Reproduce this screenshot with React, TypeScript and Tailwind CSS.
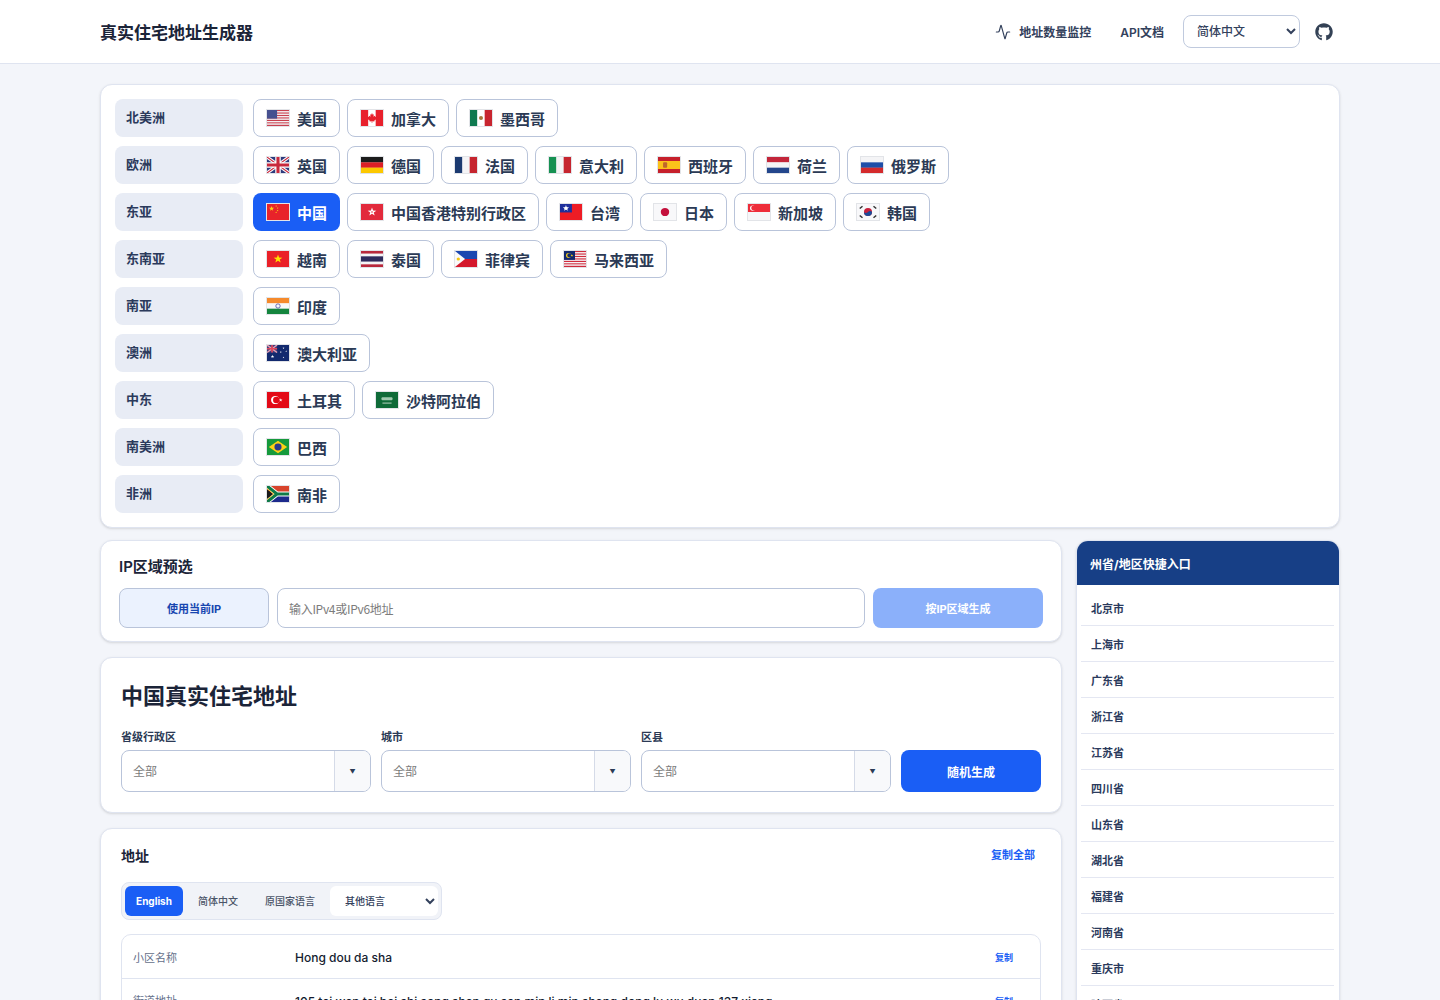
import { Activity } from 'lucide-react';
import { FaGithub } from 'react-icons/fa';
import type { ReactNode } from 'react';

const FONT = 'Inter, "Noto Sans CJK SC", sans-serif';

function Stripes({ colors }: { colors: string[] }) {
  const h = 18 / colors.length;
  return (
    <>
      {colors.map((c, i) => (
        <rect key={i} x="0" y={i * h} width="24" height={h + 0.2} fill={c} />
      ))}
    </>
  );
}

function Bars({ colors }: { colors: string[] }) {
  return (
    <>
      {colors.map((c, i) => (
        <rect key={i} x={i * 8} y="0" width="8.2" height="18" fill={c} />
      ))}
    </>
  );
}

function UsStripes({ a, b }: { a: string; b: string }) {
  const rows = Array.from({ length: 13 }, (_, i) => (i % 2 === 0 ? a : b));
  return <Stripes colors={rows} />;
}

function Star({ x, y, r, fill }: { x: number; y: number; r: number; fill: string }) {
  const pts = Array.from({ length: 10 }, (_, i) => {
    const rad = i % 2 === 0 ? r : r * 0.4;
    const ang = (Math.PI / 5) * i - Math.PI / 2;
    return `${x + rad * Math.cos(ang)},${y + rad * Math.sin(ang)}`;
  }).join(' ');
  return <polygon points={pts} fill={fill} />;
}

const FLAGS: Record<string, ReactNode> = {
  us: (
    <>
      <UsStripes a="#c8404f" b="#f4f4f6" />
      <rect width="11" height="9.7" fill="#46508f" />
    </>
  ),
  ca: (
    <>
      <Bars colors={['#e8202c', '#ffffff', '#e8202c']} />
      <polygon
        points="12,3.5 12.9,5.4 14,4.9 13.6,7.6 15,6.5 15.7,7.8 16.8,7.7 16.3,9.5 16.8,10 14.4,12 14.7,13 12.3,12.7 12.3,14.5 11.7,14.5 11.7,12.7 9.3,13 9.6,12 7.2,10 7.7,9.5 7.2,7.7 8.3,7.8 9,6.5 10.4,7.6 10,4.9 11.1,5.4"
        fill="#e8202c"
      />
    </>
  ),
  mx: (
    <>
      <Bars colors={['#0f7a50', '#ffffff', '#c8252f']} />
      <circle cx="12" cy="9" r="2.2" fill="#a5773a" />
    </>
  ),
  gb: (
    <>
      <rect width="24" height="18" fill="#2d3a7c" />
      <path d="M0 0 24 18M24 0 0 18" stroke="#fff" strokeWidth="3.6" />
      <path d="M0 0 24 18M24 0 0 18" stroke="#c8283c" strokeWidth="1.2" />
      <path d="M12 0V18M0 9H24" stroke="#fff" strokeWidth="6" />
      <path d="M12 0V18M0 9H24" stroke="#c8283c" strokeWidth="3.4" />
    </>
  ),
  de: <Stripes colors={['#1c1c1c', '#dc1f26', '#fcc800']} />,
  fr: <Bars colors={['#1b3a70', '#f4f4f6', '#c6252f']} />,
  it: <Bars colors={['#169152', '#f4f4f6', '#c6252f']} />,
  es: (
    <>
      <Stripes colors={['#c6202c', '#fbc21a', '#fbc21a', '#c6202c']} />
      <rect x="5.5" y="6" width="4.5" height="6" rx="1" fill="#c0662a" />
    </>
  ),
  nl: <Stripes colors={['#c3263a', '#f4f4f6', '#23468c']} />,
  ru: <Stripes colors={['#f4f4f6', '#1e4ea8', '#d42a2c']} />,
  cn: (
    <>
      <rect width="24" height="18" fill="#e8232a" />
      <Star x={5} y={5.2} r={3} fill="#fcd116" />
      <Star x={10} y={2.4} r={1} fill="#fcd116" />
      <Star x={11.6} y={4.6} r={1} fill="#fcd116" />
      <Star x={11.6} y={7.4} r={1} fill="#fcd116" />
      <Star x={10} y={9.4} r={1} fill="#fcd116" />
    </>
  ),
  hk: (
    <>
      <rect width="24" height="18" fill="#e22a3c" />
      <Star x={12} y={9} r={5} fill="#ffffff" />
      <circle cx="12" cy="9" r="0.9" fill="#e22a3c" />
    </>
  ),
  tw: (
    <>
      <rect width="24" height="18" fill="#ee1c25" />
      <rect width="13" height="9.5" fill="#1e2f9c" />
      <Star x={6.5} y={4.8} r={3.6} fill="#ffffff" />
      <circle cx="6.5" cy="4.8" r="1.5" fill="#ffffff" />
    </>
  ),
  jp: (
    <>
      <rect width="24" height="18" fill="#f8f8fa" />
      <circle cx="12" cy="9" r="4.6" fill="#c4103c" />
    </>
  ),
  sg: (
    <>
      <rect width="24" height="18" fill="#f6f6f8" />
      <rect width="24" height="9" fill="#ee2d3a" />
      <circle cx="5.2" cy="4.6" r="3" fill="#fff" />
      <circle cx="6.4" cy="4.6" r="2.8" fill="#ee2d3a" />
    </>
  ),
  kr: (
    <>
      <rect width="24" height="18" fill="#f8f8fa" />
      <circle cx="12" cy="9" r="4.4" fill="#c8203c" />
      <path d="M7.6 9a4.4 4.4 0 0 0 8.8 0c-1-1.6-3-1.6-4.4 0s-3.4 1.6-4.4 0z" fill="#1c4a98" />
      <path d="M3 5 6 2.5M18 2.5 21 5M3 13 6 15.5M18 15.5 21 13" stroke="#333" strokeWidth="1.6" />
    </>
  ),
  vn: (
    <>
      <rect width="24" height="18" fill="#ea2028" />
      <Star x={12} y={9} r={5} fill="#ffe000" />
    </>
  ),
  th: <Stripes colors={['#b8283c', '#f4f4f6', '#2d2a5c', '#2d2a5c', '#f4f4f6', '#b8283c']} />,
  ph: (
    <>
      <rect width="24" height="9" fill="#1b47b0" />
      <rect y="9" width="24" height="9" fill="#d4182c" />
      <polygon points="0,0 11,9 0,18" fill="#fafafa" />
      <circle cx="3.6" cy="9" r="1.8" fill="#f6c70f" />
    </>
  ),
  my: (
    <>
      <UsStripes a="#cf2a3c" b="#f6f6f8" />
      <rect width="12" height="10" fill="#12296e" />
      <circle cx="5" cy="5" r="2.8" fill="#fcd116" />
      <circle cx="6" cy="5" r="2.4" fill="#12296e" />
      <Star x={8.6} y={5} r={1.6} fill="#fcd116" />
    </>
  ),
  in: (
    <>
      <Stripes colors={['#f58a2c', '#f8f8fa', '#14853e']} />
      <circle cx="12" cy="9" r="2.4" fill="none" stroke="#3a3a98" strokeWidth="0.8" />
    </>
  ),
  au: (
    <>
      <rect width="24" height="18" fill="#12296e" />
      <rect width="11" height="8.5" fill="#3d3f80" />
      <path d="M0 0 11 8.5M11 0 0 8.5" stroke="#e8a0b0" strokeWidth="1.6" />
      <path d="M5.5 0V8.5M0 4.2H11" stroke="#e0485c" strokeWidth="1.8" />
      <Star x={6} y={13} r={2} fill="#fff" />
      <Star x={18} y={3.5} r={1.1} fill="#fff" />
      <Star x={15} y={8} r={1.1} fill="#fff" />
      <Star x={21} y={7} r={1.1} fill="#fff" />
      <Star x={18} y={14} r={1.1} fill="#fff" />
    </>
  ),
  tr: (
    <>
      <rect width="24" height="18" fill="#e30a17" />
      <circle cx="9" cy="9" r="4.6" fill="#fff" />
      <circle cx="10.2" cy="9" r="3.6" fill="#e30a17" />
      <Star x={15} y={9} r={2} fill="#fff" />
    </>
  ),
  sa: (
    <>
      <rect width="24" height="18" fill="#0f6a38" />
      <rect x="6" y="6" width="12" height="3.2" rx="1" fill="#9fc8ae" />
      <rect x="7" y="12" width="10" height="0.9" fill="#dfeee4" />
    </>
  ),
  br: (
    <>
      <rect width="24" height="18" fill="#169a3c" />
      <polygon points="12,2 22,9 12,16 2,9" fill="#fcd116" />
      <circle cx="12" cy="9" r="3.9" fill="#2a3a8c" />
    </>
  ),
  za: (
    <>
      <rect width="24" height="9" fill="#d8442c" />
      <rect y="9" width="24" height="9" fill="#1c2a8c" />
      <path d="M0 0 11 9 0 18M11 9H24" fill="none" stroke="#fff" strokeWidth="5.4" />
      <path d="M0 0 11 9 0 18M11 9H24" fill="none" stroke="#0f7a48" strokeWidth="3.4" />
      <polygon points="0,3.6 6.4,9 0,14.4" fill="#1a1a1a" />
      <path d="M0 2.8 7.4 9 0 15.2" fill="none" stroke="#fbc21a" strokeWidth="1" />
    </>
  ),
};

function Flag({ code }: { code: string }) {
  return (
    <svg viewBox="0 0 24 18" className="w-6 h-[18px] shrink-0 border border-[#e2e4e8]" preserveAspectRatio="none">
      {FLAGS[code]}
    </svg>
  );
}

const REGIONS = [
  { name: '北美洲', items: [['us', '美国'], ['ca', '加拿大'], ['mx', '墨西哥']] },
  { name: '欧洲', items: [['gb', '英国'], ['de', '德国'], ['fr', '法国'], ['it', '意大利'], ['es', '西班牙'], ['nl', '荷兰'], ['ru', '俄罗斯']] },
  { name: '东亚', items: [['cn', '中国'], ['hk', '中国香港特别行政区'], ['tw', '台湾'], ['jp', '日本'], ['sg', '新加坡'], ['kr', '韩国']] },
  { name: '东南亚', items: [['vn', '越南'], ['th', '泰国'], ['ph', '菲律宾'], ['my', '马来西亚']] },
  { name: '南亚', items: [['in', '印度']] },
  { name: '澳洲', items: [['au', '澳大利亚']] },
  { name: '中东', items: [['tr', '土耳其'], ['sa', '沙特阿拉伯']] },
  { name: '南美洲', items: [['br', '巴西']] },
  { name: '非洲', items: [['za', '南非']] },
];

const PROVINCES = ['北京市', '上海市', '广东省', '浙江省', '江苏省', '四川省', '山东省', '湖北省', '福建省', '河南省', '重庆市', '陕西省'];

const ADDRESS_ROWS = [
  ['小区名称', 'Hong dou da sha'],
  ['街道地址', '105 tai wan tai bei shi song shan qu san min li min sheng dong lu wu duan 137 xiang'],
  ['城市', 'Tai bei shi'],
];

function FakeSelect({ label }: { label: string }) {
  return (
    <div className="flex-1 min-w-0">
      <div className="text-[11px] leading-4 font-semibold text-[#2b3a55] mb-[5px]">{label}</div>
      <div className="h-[42px] flex items-stretch bg-white border border-[#b9c4da] rounded-lg overflow-hidden">
        <div className="flex-1 flex items-center pl-[11px] pt-px text-xs text-[#7c7c7c]">全部</div>
        <div className="w-9 flex items-center justify-center bg-[#f8f9fb] border-l border-[#d5dbe8] text-[6px] text-[#2b3a55]">▼</div>
      </div>
    </div>
  );
}

export default function App() {
  return (
    <div className="min-h-screen bg-[#f3f5fa] pb-8" style={{ fontFamily: FONT }}>
      {/* Header */}
      <header className="h-16 bg-white border-b border-[#dfe4f0]">
        <div className="w-[1240px] h-full mx-auto flex items-center justify-between">
          <h1 className="pt-1 text-[17px] font-bold text-[#1b2438]">真实住宅地址生成器</h1>
          <div className="flex items-center">
            <a className="flex items-center gap-2 text-xs font-semibold text-[#33415c]">
              <Activity className="w-4 h-4" strokeWidth={1.75} />
              <span className="pt-[2px]">地址数量监控</span>
            </a>
            <a className="ml-[29px] pt-[2px] text-xs font-semibold text-[#33415c]">API文档</a>
            <select className="ml-[19px] w-[117px] h-[33px] pl-[9px] bg-white border border-[#c0cade] rounded-lg text-xs font-medium text-[#33415c]">
              <option>简体中文</option>
            </select>
            <FaGithub className="ml-[15px] mr-[7px] w-[18px] h-[18px] text-[#334155]" />
          </div>
        </div>
      </header>

      <main className="w-[1240px] mx-auto pt-5">
        {/* Country picker */}
        <section className="bg-white border border-[#dfe4f0] rounded-xl p-[14px] flex flex-col gap-[9px] shadow-sm">
          {REGIONS.map((region) => (
            <div key={region.name} className="flex gap-[10px]">
              <div className="w-32 h-[38px] shrink-0 flex items-center pl-[11px] bg-[#e8ecf5] rounded-lg text-[13px] font-bold text-[#2b3a5c]">
                {region.name}
              </div>
              <div className="flex gap-[7px]">
                {region.items.map(([code, label]) => (
                  <button
                    key={code}
                    className={
                      code === 'cn'
                        ? 'h-[38px] px-[13px] flex items-center gap-[7px] rounded-lg bg-[#1a5ef5] text-white text-[15px] font-semibold'
                        : 'h-[38px] px-3 flex items-center gap-[7px] rounded-lg bg-white border border-[#b9c4da] text-[#2b3a55] text-[15px] font-semibold'
                    }
                  >
                    <Flag code={code} />
                    <span className="pt-1">{label}</span>
                  </button>
                ))}
              </div>
            </div>
          ))}
        </section>

        <div className="mt-3 flex items-start gap-[14px]">
          <div className="w-[962px] shrink-0 flex flex-col gap-[15px]">
            {/* IP preselect */}
            <section className="bg-white border border-[#dfe4f0] rounded-xl px-[18px] pt-[14px] pb-[13px] shadow-sm">
              <h2 className="pt-px text-[15px] leading-[22px] font-semibold text-[#1b2438] mb-[10px]">IP区域预选</h2>
              <div className="flex gap-2">
                <button className="w-[150px] h-10 pt-[2px] bg-[#ebf2fe] border border-[#b9c4da] rounded-lg text-[11px] font-bold text-[#1746b0]">使用当前IP</button>
                <input
                  className="flex-1 h-10 px-[11px] bg-white border border-[#b9c4da] rounded-lg text-xs tracking-[-0.3px] font-['Noto_Sans_CJK_SC'] placeholder:text-[#7c7c7c]"
                  placeholder="输入IPv4或IPv6地址"
                />
                <button className="w-[170px] h-10 pt-[2px] bg-[#8bb0fa] rounded-lg text-[11px] font-bold text-white">按IP区域生成</button>
              </div>
            </section>

            {/* Filters */}
            <section className="bg-white border border-[#dfe4f0] rounded-xl px-5 pt-[23px] pb-5 shadow-sm">
              <h2 className="text-[22px] leading-[30px] font-bold text-[#1b2438] mb-[18px]">中国真实住宅地址</h2>
              <div className="flex items-end gap-[10px]">
                <FakeSelect label="省级行政区" />
                <FakeSelect label="城市" />
                <FakeSelect label="区县" />
                <button className="w-[140px] h-[42px] shrink-0 pt-1 bg-[#1a5ef5] rounded-lg text-xs font-bold text-white">随机生成</button>
              </div>
            </section>

            {/* Address */}
            <section className="bg-white border border-[#dfe4f0] rounded-xl px-5 pt-[18px] pb-5 shadow-sm">
              <div className="flex items-center justify-between mb-[18px]">
                <h2 className="text-sm leading-[17px] font-bold text-[#1b2438]">地址</h2>
                <button className="mr-[6px] text-[11px] font-semibold text-[#1a5ef5]">复制全部</button>
              </div>
              <div className="w-[321px] h-[38px] flex items-stretch gap-[3px] p-[3px] bg-[#f1f3f8] border border-[#dfe4f0] rounded-lg">
                <button className="w-[58px] shrink-0 whitespace-nowrap bg-[#1a5ef5] rounded-md text-[10px] font-bold text-white">English</button>
                <button className="shrink-0 whitespace-nowrap px-3 pt-px text-[10px] font-medium text-[#4b5568]">简体中文</button>
                <button className="shrink-0 whitespace-nowrap px-3 pt-px text-[10px] font-medium text-[#4b5568]">原国家语言</button>
                <select className="w-[108px] shrink-0 pl-[11px] bg-white rounded-md text-[10px] font-medium text-[#33415c]">
                  <option>其他语言</option>
                </select>
              </div>
              <div className="mt-[14px] border border-[#dfe4f0] rounded-[10px] overflow-hidden">
                {ADDRESS_ROWS.map(([label, value], i) => (
                  <div key={label} className={i === 0 ? 'h-[43px] pt-[3px] flex items-center px-[11px]' : 'h-11 pt-[2px] flex items-center px-[11px] border-t border-[#dfe4f0]'}>
                    <div className="w-[162px] shrink-0 text-[11px] text-[#64708a]">{label}</div>
                    <div className="flex-1 text-xs font-medium text-[#141c30]">{value}</div>
                    <button className="mr-4 text-[9px] font-semibold text-[#1a5ef5]">复制</button>
                  </div>
                ))}
              </div>
            </section>
          </div>

          {/* Sidebar */}
          <aside className="flex-1 min-w-0 bg-white border border-[#dfe4f0] rounded-xl overflow-hidden shadow-sm">
            <div className="h-11 flex items-center pl-[13px] pt-[4px] bg-[#173f86] text-xs font-bold text-white">州省/地区快捷入口</div>
            <ul className="pl-1 pr-[5px] pt-[5px]">
              {PROVINCES.map((p) => (
                <li key={p} className="h-9 flex items-center pl-[10px] pt-1 border-b border-[#e4e7f2] text-[11px] font-semibold text-[#2b3a5c]">
                  {p}
                </li>
              ))}
            </ul>
          </aside>
        </div>
      </main>
    </div>
  );
}
